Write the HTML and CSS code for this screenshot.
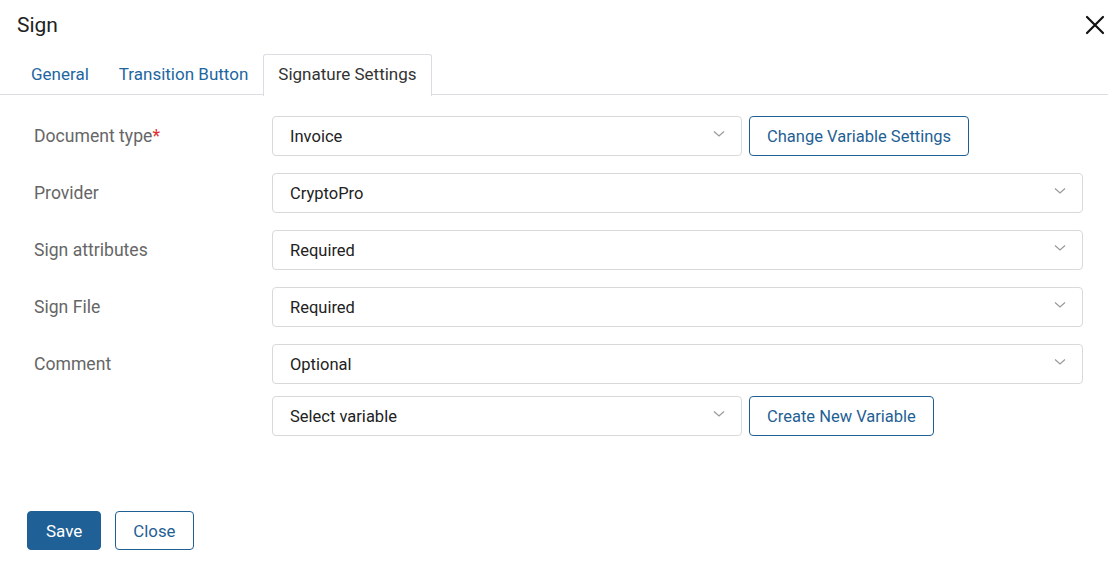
FILE: index.html
```html
<!DOCTYPE html>
<html>
<head>
<meta charset="utf-8">
<link rel="stylesheet" href="styles.css">
</head>
<body>
<div class="dialog">
  <div class="header">
    <div class="title">Sign</div>
    <button class="close-x" aria-label="Close">
      <svg width="20" height="20" viewBox="0 0 20 20"><path d="M2 2 L18 18 M18 2 L2 18" stroke="#111" stroke-width="2.2" stroke-linecap="round"/></svg>
    </button>
  </div>
  <div class="tabs">
    <div class="tab">General</div>
    <div class="tab">Transition Button</div>
    <div class="tab active">Signature Settings</div>
  </div>
  <div class="form">
    <div class="row">
      <div class="label">Document type<span class="req">*</span></div>
      <div class="field">
        <div class="select narrow"><span>Invoice</span><svg class="chev" width="12" height="8" viewBox="0 0 12 8"><path d="M1 1.5 L6 6 L11 1.5" fill="none" stroke="#999" stroke-width="1.2"/></svg></div>
        <button class="btn-outline">Change Variable Settings</button>
      </div>
    </div>
    <div class="row">
      <div class="label">Provider</div>
      <div class="field">
        <div class="select wide"><span>CryptoPro</span><svg class="chev" width="12" height="8" viewBox="0 0 12 8"><path d="M1 1.5 L6 6 L11 1.5" fill="none" stroke="#999" stroke-width="1.2"/></svg></div>
      </div>
    </div>
    <div class="row">
      <div class="label">Sign attributes</div>
      <div class="field">
        <div class="select wide"><span>Required</span><svg class="chev" width="12" height="8" viewBox="0 0 12 8"><path d="M1 1.5 L6 6 L11 1.5" fill="none" stroke="#999" stroke-width="1.2"/></svg></div>
      </div>
    </div>
    <div class="row">
      <div class="label">Sign File</div>
      <div class="field">
        <div class="select wide"><span>Required</span><svg class="chev" width="12" height="8" viewBox="0 0 12 8"><path d="M1 1.5 L6 6 L11 1.5" fill="none" stroke="#999" stroke-width="1.2"/></svg></div>
      </div>
    </div>
    <div class="row">
      <div class="label">Comment</div>
      <div class="field">
        <div class="select wide"><span>Optional</span><svg class="chev" width="12" height="8" viewBox="0 0 12 8"><path d="M1 1.5 L6 6 L11 1.5" fill="none" stroke="#999" stroke-width="1.2"/></svg></div>
      </div>
    </div>
    <div class="row tight">
      <div class="label"></div>
      <div class="field">
        <div class="select narrow"><span>Select variable</span><svg class="chev" width="12" height="8" viewBox="0 0 12 8"><path d="M1 1.5 L6 6 L11 1.5" fill="none" stroke="#999" stroke-width="1.2"/></svg></div>
        <button class="btn-outline">Create New Variable</button>
      </div>
    </div>
  </div>
  <div class="footer">
    <button class="btn-primary">Save</button>
    <button class="btn-outline">Close</button>
  </div>
</div>
</body>
</html>
```
FILE: styles.css
```css
* { box-sizing: border-box; }
html, body { margin: 0; padding: 0; background: #fff; }
body { font-family: Roboto, "Liberation Sans", sans-serif; color: #222; }
.dialog { width: 1108px; height: 568px; display: flex; flex-direction: column; }
.header { height: 54px; display: flex; align-items: center; justify-content: space-between; padding: 0 3px 4px 17px; }
.title { font-size: 21px; color: #222; }
.close-x { border: 0; background: none; padding: 0; width: 20px; height: 20px; display: flex; }
.tabs { display: flex; padding-left: 16px; border-bottom: 1px solid #dcdce3; height: 41px; }
.tab { padding: 0 14px 2px; font-size: 17px; color: #2266a0; display: flex; align-items: center; height: 41px; border: 1px solid transparent; border-bottom: 0; }
.tab.active { color: #333; background: #fff; border-color: #dcdce3; border-radius: 3px 3px 0 0; height: 42px; padding-bottom: 3px; }
.form { padding: 21px 24px 0 34px; display: flex; flex-direction: column; gap: 17px; }
.row { display: flex; align-items: center; height: 40px; }
.row.tight { margin-top: -5px; }
.label { width: 238px; font-size: 17.6px; color: #666; flex-shrink: 0; }
.req { color: #e03030; }
.field { display: flex; gap: 7px; flex: 1; }
.select { height: 40px; border: 1px solid #d9d9d9; border-radius: 4px; display: flex; align-items: center; justify-content: space-between; padding: 0 16px 0 17px; font-size: 16.5px; color: #222; background: #fff; }
.select.narrow { width: 470px; }
.select.wide { width: 811px; }
.chev { margin-top: -4px; }
.btn-outline { height: 40px; border: 1px solid #1f5f94; border-radius: 4px; background: #fff; color: #1f5f94; font-family: inherit; font-size: 16.5px; padding: 0 17px; }
.footer { margin-top: auto; padding: 0 0 18px 27px; display: flex; gap: 14px; }
.btn-primary { height: 39px; border: 1px solid #1f6096; border-radius: 4px; background: #1f6096; color: #fff; font-family: inherit; font-size: 17px; padding: 0 18px; }
.footer .btn-outline { height: 39px; padding: 0 17px; font-size: 16.8px; }
```
